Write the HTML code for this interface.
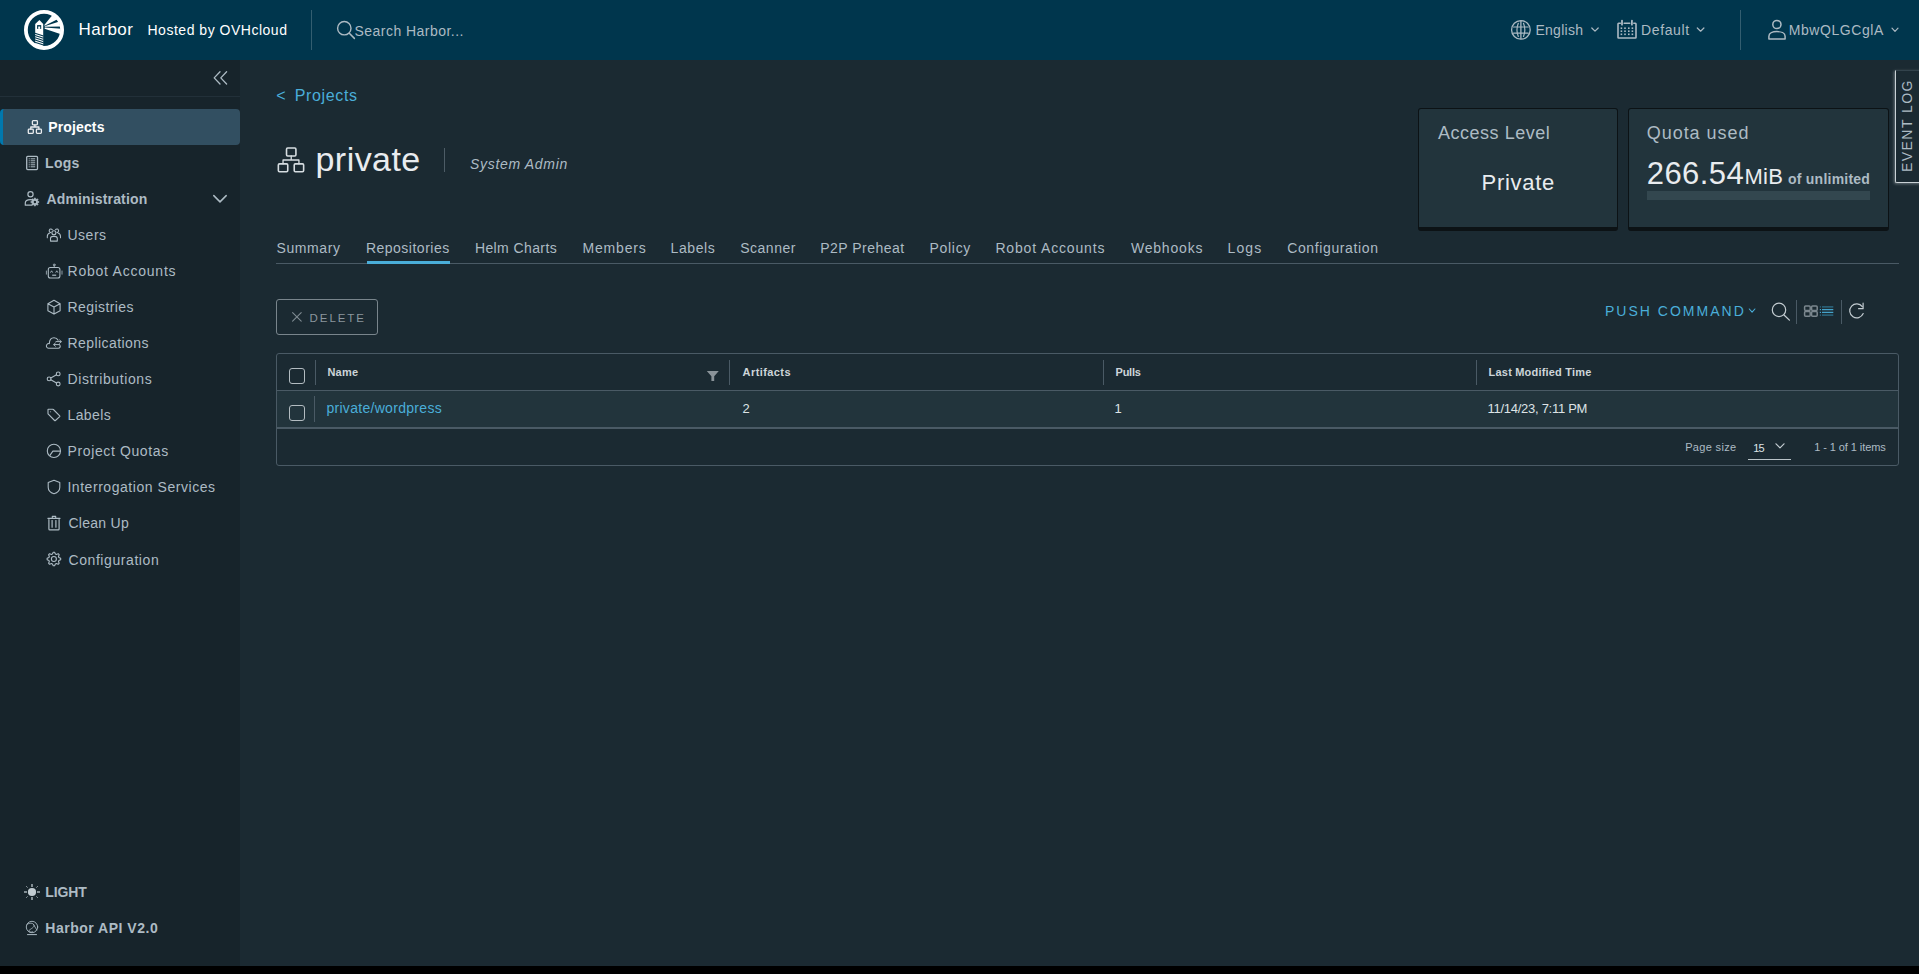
<!DOCTYPE html>
<html><head><meta charset="utf-8"><title>Harbor</title>
<style>
html,body{margin:0;padding:0;}
body{width:1919px;height:974px;position:relative;overflow:hidden;background:#000;font-family:"Liberation Sans",sans-serif;}
.t{position:absolute;white-space:nowrap;font-family:"Liberation Sans",sans-serif;}
.i{position:absolute;overflow:visible;}
.b{position:absolute;box-sizing:border-box;}
</style></head><body>
<div class="b" style="left:0px;top:0px;width:1919px;height:60px;background:#00364d"></div>
<div class="b" style="left:0px;top:60px;width:240px;height:906px;background:#17242b"></div>
<div class="b" style="left:240px;top:60px;width:1679px;height:906px;background:#1b2a32"></div>
<div class="b" style="left:0px;top:96px;width:240px;height:1px;background:#223039"></div>
<div class="b" style="left:0px;top:109px;width:240px;height:36px;background:#324f61;border-radius:4px;border-left:3px solid #0078ae"></div>
<div class="b" style="left:311px;top:10px;width:1px;height:40px;background:rgba(255,255,255,0.2)"></div>
<div class="b" style="left:1740px;top:10px;width:1px;height:40px;background:rgba(255,255,255,0.2)"></div>
<div class="b" style="left:444px;top:148px;width:1px;height:24px;background:#4d5c66"></div>
<div class="b" style="left:1418px;top:108px;width:200px;height:123px;background:#22343c;border:1px solid #0c1215;border-bottom-width:4px;border-radius:3px"></div>
<div class="b" style="left:1628px;top:108px;width:261px;height:123px;background:#22343c;border:1px solid #0c1215;border-bottom-width:4px;border-radius:3px"></div>
<div class="b" style="left:1647px;top:191px;width:223px;height:9px;background:#33474f"></div>
<div class="b" style="left:1895px;top:70px;width:30px;height:113px;background:#1b2a32;border-left:1.5px solid #c9d1d5;border-bottom:1.5px solid #c9d1d5;border-top:1px solid #33434c;box-shadow:-1px 1px 3px rgba(190,200,205,0.45);border-radius:0 0 0 2px"></div>
<span class="t" style="left:1900px;top:172px;transform-origin:0 0;transform:rotate(-90deg);font-size:14px;line-height:14px;letter-spacing:1.45px;color:#adbbc4">EVENT LOG</span>
<div class="b" style="left:276px;top:263px;width:1623px;height:1px;background:#4a5a65"></div>
<div class="b" style="left:367px;top:261px;width:83px;height:3px;background:#4aaed9"></div>
<div class="b" style="left:276px;top:299px;width:102px;height:36px;border:1px solid #79858c;border-radius:3px"></div>
<div class="b" style="left:1796px;top:300px;width:1px;height:24px;background:#4a5a65"></div>
<div class="b" style="left:1841px;top:300px;width:1px;height:24px;background:#4a5a65"></div>
<div class="b" style="left:276px;top:353px;width:1623px;height:113px;border:1px solid #4a5a65;border-radius:3px"></div>
<div class="b" style="left:277px;top:391px;width:1621px;height:36px;background:#22343c"></div>
<div class="b" style="left:277px;top:390px;width:1621px;height:1px;background:#4a5a65"></div>
<div class="b" style="left:277px;top:427px;width:1621px;height:2px;background:#4a5a65"></div>
<div class="b" style="left:315px;top:360px;width:1px;height:25px;background:#4a5a65"></div>
<div class="b" style="left:729px;top:360px;width:1px;height:25px;background:#4a5a65"></div>
<div class="b" style="left:1103px;top:360px;width:1px;height:25px;background:#4a5a65"></div>
<div class="b" style="left:1476px;top:360px;width:1px;height:25px;background:#4a5a65"></div>
<div class="b" style="left:314px;top:396px;width:1px;height:26px;background:#4a5a65"></div>
<div class="b" style="left:289px;top:368px;width:16px;height:16px;border:1.5px solid #b3bcc1;border-radius:3px"></div>
<div class="b" style="left:289px;top:405px;width:16px;height:16px;border:1.5px solid #b3bcc1;border-radius:3px"></div>
<div class="b" style="left:1748px;top:459px;width:43px;height:1px;background:#b9c3c8"></div>
<div class="b" style="left:0px;top:966px;width:1919px;height:8px;background:#000"></div>
<svg class="i" style="left:0;top:0;width:1919px;height:974px" viewBox="0 0 1919 974"><defs><clipPath id="lc"><circle cx="44" cy="29.9" r="16.7"/></clipPath></defs>
<circle cx="44" cy="29.9" r="18.1" fill="none" stroke="#fff" stroke-width="3.8"/>
<g clip-path="url(#lc)" fill="#fff">
<polygon points="35.2,24.1 39.4,20.1 43.2,24.1 43.2,48 35.2,48"/>
<polygon points="44.3,24.9 53.5,13.8 60,18 44.6,25.8"/>
<polygon points="44.6,26.25 61,20.9 62,26.4 44.8,26.85"/>
<polygon points="44.8,27.5 62,28.75 62,34.7 44.6,28.8"/>
</g>
<rect x="37.1" y="25.1" width="4.1" height="3.8" fill="#00364d"/>
<rect x="38.2" y="26.5" width="2" height="2.4" fill="#fff"/>
<g clip-path="url(#lc)" stroke="#00364d" stroke-width="1.05">
<line x1="35" y1="33.2" x2="43.4" y2="36.1"/><line x1="35" y1="35.45" x2="43.4" y2="38.35"/>
<line x1="35" y1="37.7" x2="43.4" y2="40.6"/><line x1="35" y1="39.95" x2="43.4" y2="42.85"/>
<line x1="35" y1="42.2" x2="43.4" y2="45.1"/>
</g><circle cx="344.3" cy="28.2" r="6.7" fill="none" stroke="#acbac3" stroke-width="1.4" stroke-linecap="round" stroke-linejoin="round"/><line x1="349.3" y1="33.3" x2="354.4" y2="38.4" fill="none" stroke="#acbac3" stroke-width="1.5" stroke-linecap="round" stroke-linejoin="round"/><circle cx="1520.9" cy="29.9" r="9.3" fill="none" stroke="#acbac3" stroke-width="1.3" stroke-linecap="round" stroke-linejoin="round"/><line x1="1520.9" y1="21.3" x2="1520.9" y2="38.5" fill="none" stroke="#acbac3" stroke-width="1.3" stroke-linecap="round" stroke-linejoin="round"/><line x1="1513.5" y1="27" x2="1528.3" y2="27" fill="none" stroke="#acbac3" stroke-width="1.2" stroke-linecap="round" stroke-linejoin="round"/><line x1="1513.5" y1="33.2" x2="1528.3" y2="33.2" fill="none" stroke="#acbac3" stroke-width="1.2" stroke-linecap="round" stroke-linejoin="round"/><path d="M1518.3,23.3 Q1515.6,29.9 1518.3,36.5 M1523.5,23.3 Q1526.2,29.9 1523.5,36.5" fill="none" stroke="#acbac3" stroke-width="1.2" stroke-linecap="round" stroke-linejoin="round"/><polyline points="1591.8,28 1595,31.2 1598.2,28" fill="none" stroke="#acbac3" stroke-width="1.2" stroke-linecap="round" stroke-linejoin="round"/><path d="M1620.3,23.3 L1618.6,23.3 Q1618,23.3 1618,24 L1618,37.4 Q1618,38 1618.6,38 L1635.4,38 Q1636,38 1636,37.4 L1636,24 Q1636,23.3 1635.4,23.3 L1633.8,23.3" fill="none" stroke="#acbac3" stroke-width="1.6" stroke-linecap="round" stroke-linejoin="round"/><line x1="1624.2" y1="23.3" x2="1629.7" y2="23.3" fill="none" stroke="#acbac3" stroke-width="1.6" stroke-linecap="round" stroke-linejoin="round"/><line x1="1622" y1="20.6" x2="1622" y2="24.7" fill="none" stroke="#acbac3" stroke-width="1.8" stroke-linecap="round" stroke-linejoin="round"/><line x1="1631.9" y1="20.6" x2="1631.9" y2="24.7" fill="none" stroke="#acbac3" stroke-width="1.8" stroke-linecap="round" stroke-linejoin="round"/><rect x="1620.6000000000001" y="27.4" width="1.6" height="1.6" fill="#acbac3"/><rect x="1624.2" y="27.4" width="1.6" height="1.6" fill="#acbac3"/><rect x="1628.0" y="27.4" width="1.6" height="1.6" fill="#acbac3"/><rect x="1631.6000000000001" y="27.4" width="1.6" height="1.6" fill="#acbac3"/><rect x="1620.6000000000001" y="30.4" width="1.6" height="1.6" fill="#acbac3"/><rect x="1624.2" y="30.4" width="1.6" height="1.6" fill="#acbac3"/><rect x="1628.0" y="30.4" width="1.6" height="1.6" fill="#acbac3"/><rect x="1631.6000000000001" y="30.4" width="1.6" height="1.6" fill="#acbac3"/><rect x="1620.6000000000001" y="33.5" width="1.6" height="1.6" fill="#acbac3"/><rect x="1624.2" y="33.5" width="1.6" height="1.6" fill="#acbac3"/><rect x="1628.0" y="33.5" width="1.6" height="1.6" fill="#acbac3"/><rect x="1631.6000000000001" y="33.5" width="1.6" height="1.6" fill="#acbac3"/><polyline points="1697.3,28 1700.6,31.2 1703.9,28" fill="none" stroke="#acbac3" stroke-width="1.2" stroke-linecap="round" stroke-linejoin="round"/><circle cx="1776.9" cy="24.5" r="4.1" fill="none" stroke="#acbac3" stroke-width="1.5" stroke-linecap="round" stroke-linejoin="round"/><path d="M1768.9,39 L1768.9,36.3 C1768.9,33.2 1772.8,31.6 1776.9,31.6 C1781,31.6 1785.1,33.2 1785.1,36.3 L1785.1,39 Z" fill="none" stroke="#acbac3" stroke-width="1.5" stroke-linecap="round" stroke-linejoin="round"/><polyline points="1892,28.2 1895,31.3 1898,28.2" fill="none" stroke="#acbac3" stroke-width="1.2" stroke-linecap="round" stroke-linejoin="round"/><polyline points="220,71.8 214.2,77.9 220,84" fill="none" stroke="#adbbc4" stroke-width="1.3" stroke-linecap="round" stroke-linejoin="round"/><polyline points="226.6,71.8 220.8,77.9 226.6,84" fill="none" stroke="#adbbc4" stroke-width="1.3" stroke-linecap="round" stroke-linejoin="round"/><g transform="translate(27.6,120) scale(1.0)"><rect x="4.8" y="0.7" width="5" height="4.2" rx="0.8" fill="none" stroke="#e9ecef" stroke-width="1.3" stroke-linecap="round" stroke-linejoin="round"/><rect x="0.7" y="9.2" width="5" height="4.2" rx="0.8" fill="none" stroke="#e9ecef" stroke-width="1.3" stroke-linecap="round" stroke-linejoin="round"/><rect x="8.8" y="9.2" width="5" height="4.2" rx="0.8" fill="none" stroke="#e9ecef" stroke-width="1.3" stroke-linecap="round" stroke-linejoin="round"/><path d="M7.3,4.9 V7 M3.2,9.2 V7 H11.3 V9.2" fill="none" stroke="#e9ecef" stroke-width="1.3" stroke-linecap="round" stroke-linejoin="round"/></g><rect x="26.7" y="156.3" width="10.8" height="13.3" rx="1" fill="none" stroke="#adbbc4" stroke-width="1.3" stroke-linecap="round" stroke-linejoin="round"/><line x1="30.6" y1="158.8" x2="35.2" y2="158.8" stroke="#adbbc4" stroke-width="1"/><rect x="28.7" y="158.3" width="1" height="1" fill="#adbbc4"/><line x1="30.6" y1="160.8" x2="35.2" y2="160.8" stroke="#adbbc4" stroke-width="1"/><rect x="28.7" y="160.3" width="1" height="1" fill="#adbbc4"/><line x1="30.6" y1="162.8" x2="35.2" y2="162.8" stroke="#adbbc4" stroke-width="1"/><rect x="28.7" y="162.3" width="1" height="1" fill="#adbbc4"/><line x1="30.6" y1="164.8" x2="35.2" y2="164.8" stroke="#adbbc4" stroke-width="1"/><rect x="28.7" y="164.3" width="1" height="1" fill="#adbbc4"/><line x1="30.6" y1="166.8" x2="35.2" y2="166.8" stroke="#adbbc4" stroke-width="1"/><rect x="28.7" y="166.3" width="1" height="1" fill="#adbbc4"/><circle cx="30.5" cy="194.3" r="2.6" fill="none" stroke="#adbbc4" stroke-width="1.2" stroke-linecap="round" stroke-linejoin="round"/><path d="M31.5,205.2 H25.3 V203 C25.3,200.8 27.8,199.6 30.5,199.6 C31.2,199.6 31.8,199.7 32.4,199.8" fill="none" stroke="#adbbc4" stroke-width="1.2" stroke-linecap="round" stroke-linejoin="round"/><polygon points="34.50,197.92 35.30,197.92 35.77,199.13 36.31,199.35 37.50,198.83 38.07,199.40 37.55,200.59 37.77,201.13 38.98,201.60 38.98,202.40 37.77,202.87 37.55,203.41 38.07,204.60 37.50,205.17 36.31,204.65 35.77,204.87 35.30,206.08 34.50,206.08 34.03,204.87 33.49,204.65 32.30,205.17 31.73,204.60 32.25,203.41 32.03,202.87 30.82,202.40 30.82,201.60 32.03,201.13 32.25,200.59 31.73,199.40 32.30,198.83 33.49,199.35 34.03,199.13" fill="#adbbc4" stroke="#adbbc4" stroke-width="0.6" stroke-linejoin="round"/><circle cx="34.9" cy="202" r="1.2" fill="#17242b"/><polyline points="213.8,195.6 220,201.9 226.2,195.6" fill="none" stroke="#adbbc4" stroke-width="1.5" stroke-linecap="round" stroke-linejoin="round"/><circle cx="53.9" cy="232.7" r="2.0" fill="none" stroke="#adbbc4" stroke-width="1.1" stroke-linecap="round" stroke-linejoin="round"/><path d="M50.5,241.1 V238.3 C50.5,236.9 51.9,236.4 53.9,236.4 C55.9,236.4 57.3,236.9 57.3,238.3 V241.1 Z" fill="none" stroke="#adbbc4" stroke-width="1.1" stroke-linecap="round" stroke-linejoin="round"/><path d="M52.3,229.8 C51.9,229.2 51.2,229 50.5,229.1 C49.5,229.3 49,230.3 49.3,231.3 C49.5,231.9 50.1,232.3 50.8,232.4 M49.8,232.9 C48.3,233.4 47.3,234.7 47.3,236.4 V237.8" fill="none" stroke="#adbbc4" stroke-width="1.05" stroke-linecap="round" stroke-linejoin="round"/><path d="M55.5,229.8 C55.9,229.2 56.6,229 57.3,229.1 C58.3,229.3 58.8,230.3 58.5,231.3 C58.3,231.9 57.7,232.3 57,232.4 M58,232.9 C59.5,233.4 60.5,234.7 60.5,236.4 V237.8" fill="none" stroke="#adbbc4" stroke-width="1.05" stroke-linecap="round" stroke-linejoin="round"/><rect x="48.3" y="267.5" width="11.6" height="10.5" rx="2" fill="none" stroke="#adbbc4" stroke-width="1.1" stroke-linecap="round" stroke-linejoin="round"/><circle cx="54.2" cy="264.9" r="0.9" fill="none" stroke="#adbbc4" stroke-width="0.85" stroke-linecap="round" stroke-linejoin="round"/><line x1="54.2" y1="265.8" x2="54.2" y2="267.5" fill="none" stroke="#adbbc4" stroke-width="0.85" stroke-linecap="round" stroke-linejoin="round"/><path d="M50.7,272.3 L51.6,270.8 L52.5,272.3 M55.9,272.3 L56.8,270.8 L57.7,272.3" fill="none" stroke="#adbbc4" stroke-width="0.9" stroke-linecap="round" stroke-linejoin="round"/><rect x="52.2" y="274.6" width="4" height="1.2" fill="#adbbc4"/><line x1="46.4" y1="271" x2="46.4" y2="274.2" fill="none" stroke="#adbbc4" stroke-width="0.8" stroke-linecap="round" stroke-linejoin="round"/><line x1="62" y1="271" x2="62" y2="274.2" fill="none" stroke="#adbbc4" stroke-width="0.8" stroke-linecap="round" stroke-linejoin="round"/><path d="M54,300.3 L60.1,303.7 V310.8 L54,314.1 L47.9,310.8 V303.7 Z M47.9,303.7 L54,307 L60.1,303.7 M54,307 V314.1" fill="none" stroke="#adbbc4" stroke-width="1.1" stroke-linecap="round" stroke-linejoin="round"/><path d="M59.8,345 C60.8,346.5 60,348.2 58.2,348.2 H48.6 C46.5,348.2 45.8,346 46.9,344.5 C47.5,343.7 48.5,343.5 49.3,343.6 C49.5,340 51.5,337.8 54,337.8 C56,337.8 57.4,338.8 58.1,340.2" fill="none" stroke="#adbbc4" stroke-width="1.1" stroke-linecap="round" stroke-linejoin="round"/><path d="M56,341.6 H61.2 M59.6,340 L61.3,341.6 L59.6,343.2" fill="none" stroke="#adbbc4" stroke-width="1" stroke-linecap="round" stroke-linejoin="round"/><path d="M59.5,344.6 H53.8 M55.4,343 L53.7,344.6 L55.4,346.2" fill="none" stroke="#adbbc4" stroke-width="1" stroke-linecap="round" stroke-linejoin="round"/><circle cx="49.1" cy="378.9" r="1.9" fill="none" stroke="#adbbc4" stroke-width="1.1" stroke-linecap="round" stroke-linejoin="round"/><circle cx="58.2" cy="373.9" r="1.9" fill="none" stroke="#adbbc4" stroke-width="1.1" stroke-linecap="round" stroke-linejoin="round"/><circle cx="58.2" cy="384" r="1.9" fill="none" stroke="#adbbc4" stroke-width="1.1" stroke-linecap="round" stroke-linejoin="round"/><line x1="50.8" y1="378" x2="56.5" y2="374.8" fill="none" stroke="#adbbc4" stroke-width="1.1" stroke-linecap="round" stroke-linejoin="round"/><line x1="50.8" y1="379.8" x2="56.5" y2="383.1" fill="none" stroke="#adbbc4" stroke-width="1.1" stroke-linecap="round" stroke-linejoin="round"/><path d="M48.4,409.2 H52.6 Q53.1,409.2 53.4,409.5 L59.7,415.8 Q60.1,416.2 59.7,416.6 L55.4,420.5 Q55,420.9 54.6,420.5 L48.3,414.2 Q48,413.9 48,413.4 V409.6 Q48,409.2 48.4,409.2 Z" fill="none" stroke="#adbbc4" stroke-width="1.1" stroke-linecap="round" stroke-linejoin="round"/><circle cx="50.6" cy="411.8" r="0.55" fill="#adbbc4"/><circle cx="53.9" cy="450.9" r="6.6" fill="none" stroke="#adbbc4" stroke-width="1.1" stroke-linecap="round" stroke-linejoin="round"/><path d="M49.9,455.4 L52.9,451.1 H60.5" fill="none" stroke="#adbbc4" stroke-width="1.1" stroke-linecap="round" stroke-linejoin="round"/><path d="M54,480.3 L59.8,482.6 V487.2 C59.8,490.6 57.2,492.7 54,493.8 C50.8,492.7 48.2,490.6 48.2,487.2 V482.6 Z" fill="none" stroke="#adbbc4" stroke-width="1.1" stroke-linecap="round" stroke-linejoin="round"/><line x1="47.9" y1="518.3" x2="60" y2="518.3" fill="none" stroke="#adbbc4" stroke-width="1.2" stroke-linecap="round" stroke-linejoin="round"/><path d="M52.3,518 V516.4 H55.7 V518" fill="none" stroke="#adbbc4" stroke-width="1.1" stroke-linecap="round" stroke-linejoin="round"/><path d="M48.9,519.5 V528.9 Q48.9,529.8 49.8,529.8 H58.2 Q59.1,529.8 59.1,528.9 V519.5" fill="none" stroke="#adbbc4" stroke-width="1.2" stroke-linecap="round" stroke-linejoin="round"/><line x1="52.1" y1="520.6" x2="52.1" y2="527.2" fill="none" stroke="#adbbc4" stroke-width="1.2" stroke-linecap="round" stroke-linejoin="round"/><line x1="55.9" y1="520.6" x2="55.9" y2="527.2" fill="none" stroke="#adbbc4" stroke-width="1.2" stroke-linecap="round" stroke-linejoin="round"/><polygon points="53.23,552.23 54.57,552.23 55.41,554.02 56.35,554.41 58.21,553.74 59.16,554.69 58.49,556.55 58.88,557.49 60.67,558.33 60.67,559.67 58.88,560.51 58.49,561.45 59.16,563.31 58.21,564.26 56.35,563.59 55.41,563.98 54.57,565.77 53.23,565.77 52.39,563.98 51.45,563.59 49.59,564.26 48.64,563.31 49.31,561.45 48.92,560.51 47.13,559.67 47.13,558.33 48.92,557.49 49.31,556.55 48.64,554.69 49.59,553.74 51.45,554.41 52.39,554.02" fill="none" stroke="#adbbc4" stroke-width="1.1" stroke-linecap="round" stroke-linejoin="round"/><circle cx="53.9" cy="559" r="2.5" fill="none" stroke="#adbbc4" stroke-width="1.1" stroke-linecap="round" stroke-linejoin="round"/><circle cx="32" cy="892" r="4.1" fill="#c2ccd2"/><path d="M32,884 V887 M32,897 V900 M24,892 H27 M37,892 H40" stroke="#a5b0b6" stroke-width="1.5"/><path d="M26.2,886.2 L27.6,887.6 M36.4,896.4 L37.8,897.8 M26.2,897.8 L27.6,896.4 M36.4,887.6 L37.8,886.2" stroke="#a5b0b6" stroke-width="0.9"/><circle cx="32" cy="927" r="5.7" fill="none" stroke="#adbbc4" stroke-width="0.9" stroke-linecap="round" stroke-linejoin="round"/><path d="M27,924.5 C29.5,922.5 33,922.8 34,925 C35,927 31,928.5 29,930.5 C28,931.5 30,932.8 32.5,931.8 M33.5,924.5 L36.8,930" fill="none" stroke="#adbbc4" stroke-width="0.8" stroke-linecap="round" stroke-linejoin="round"/><line x1="27.5" y1="934.6" x2="36.5" y2="934.6" fill="none" stroke="#adbbc4" stroke-width="1" stroke-linecap="round" stroke-linejoin="round"/><g transform="translate(277.5,147.2) scale(1.88)"><rect x="4.8" y="0.45" width="5" height="4.2" rx="0.6" fill="none" stroke="#d6dde1" stroke-width="0.85" stroke-linecap="round" stroke-linejoin="round"/><rect x="0.45" y="8.85" width="5" height="4.2" rx="0.6" fill="none" stroke="#d6dde1" stroke-width="0.85" stroke-linecap="round" stroke-linejoin="round"/><rect x="8.9" y="8.85" width="5" height="4.2" rx="0.6" fill="none" stroke="#d6dde1" stroke-width="0.85" stroke-linecap="round" stroke-linejoin="round"/><path d="M7.3,4.65 V6.8 M2.95,8.85 V6.8 H11.4 V8.85" fill="none" stroke="#d6dde1" stroke-width="0.7" stroke-linecap="round" stroke-linejoin="round"/></g><path d="M292.6,312.6 L301.2,321.2 M301.2,312.6 L292.6,321.2" fill="none" stroke="#7f8b92" stroke-width="1.1" stroke-linecap="round" stroke-linejoin="round"/><polyline points="1749.3,309 1752.1,312.2 1754.9,309" fill="none" stroke="#4aaed9" stroke-width="1.1" stroke-linecap="round" stroke-linejoin="round"/><circle cx="1779" cy="309.9" r="6.7" fill="none" stroke="#c3ccd1" stroke-width="1.2" stroke-linecap="round" stroke-linejoin="round"/><line x1="1784" y1="315" x2="1789.4" y2="320.1" fill="none" stroke="#c3ccd1" stroke-width="1.3" stroke-linecap="round" stroke-linejoin="round"/><rect x="1804.6" y="305.9" width="5.6" height="4.6" rx="1" fill="none" stroke="#7b878e" stroke-width="1.5"/><rect x="1811.6" y="305.9" width="5.6" height="4.6" rx="1" fill="none" stroke="#7b878e" stroke-width="1.5"/><rect x="1804.6" y="311.6" width="5.6" height="4.6" rx="1" fill="none" stroke="#7b878e" stroke-width="1.5"/><rect x="1811.6" y="311.6" width="5.6" height="4.6" rx="1" fill="none" stroke="#7b878e" stroke-width="1.5"/><line x1="1822" y1="306.9" x2="1833.3" y2="306.9" stroke="#2f6f8a" stroke-width="1.3"/><rect x="1819.8" y="306.29999999999995" width="1.2" height="1.2" fill="#2f6f8a"/><line x1="1822" y1="309.6" x2="1833.3" y2="309.6" stroke="#44a2ca" stroke-width="1.3"/><rect x="1819.8" y="309.0" width="1.2" height="1.2" fill="#44a2ca"/><line x1="1822" y1="312.4" x2="1833.3" y2="312.4" stroke="#44a2ca" stroke-width="1.3"/><rect x="1819.8" y="311.79999999999995" width="1.2" height="1.2" fill="#44a2ca"/><line x1="1822" y1="315.1" x2="1833.3" y2="315.1" stroke="#2f6f8a" stroke-width="1.3"/><rect x="1819.8" y="314.5" width="1.2" height="1.2" fill="#2f6f8a"/><path d="M1863.2,313.6 A7,7 0 1 1 1862.3,306.6" fill="none" stroke="#c3ccd1" stroke-width="1.2" stroke-linecap="round" stroke-linejoin="round"/><path d="M1863.1,303.2 V308.7 H1858.6" fill="none" stroke="#c3ccd1" stroke-width="1.2" stroke-linecap="round" stroke-linejoin="round"/><path d="M706.8,371 H718.8 L714.2,376.3 V381 H711.4 V376.3 Z" fill="#8a9399"/><polyline points="1776,443.8 1780,447.9 1784,443.8" fill="none" stroke="#c3ccd1" stroke-width="1.2" stroke-linecap="round" stroke-linejoin="round"/></svg>
<span class="t" style="left:78.60px;top:21.00px;font-size:17px;line-height:17px;color:#ffffff;letter-spacing:0.48px;">Harbor</span><span class="t" style="left:147.50px;top:23.40px;font-size:14px;line-height:14px;color:#ffffff;letter-spacing:0.512px;">Hosted by OVHcloud</span><span class="t" style="left:354.50px;top:24.00px;font-size:14px;line-height:14px;color:#acbac3;letter-spacing:0.467px;">Search Harbor...</span><span class="t" style="left:1535.50px;top:23.00px;font-size:14px;line-height:14px;color:#acbac3;letter-spacing:0.25px;">English</span><span class="t" style="left:1641.00px;top:23.00px;font-size:14px;line-height:14px;color:#acbac3;letter-spacing:0.617px;">Default</span><span class="t" style="left:1788.70px;top:23.00px;font-size:14px;line-height:14px;color:#acbac3;letter-spacing:0.567px;">MbwQLGCglA</span><span class="t" style="left:48.30px;top:120.40px;font-size:14px;line-height:14px;color:#ffffff;letter-spacing:0.129px;font-weight:700;">Projects</span><span class="t" style="left:45.10px;top:156.20px;font-size:14px;line-height:14px;color:#adbbc4;letter-spacing:0.233px;font-weight:700;">Logs</span><span class="t" style="left:46.50px;top:192.00px;font-size:14px;line-height:14px;color:#adbbc4;letter-spacing:0.146px;font-weight:700;">Administration</span><span class="t" style="left:67.50px;top:228.10px;font-size:14px;line-height:14px;color:#adbbc4;letter-spacing:0.5px;">Users</span><span class="t" style="left:67.50px;top:263.60px;font-size:14px;line-height:14px;color:#adbbc4;letter-spacing:0.769px;">Robot Accounts</span><span class="t" style="left:67.50px;top:299.60px;font-size:14px;line-height:14px;color:#adbbc4;letter-spacing:0.422px;">Registries</span><span class="t" style="left:67.50px;top:335.60px;font-size:14px;line-height:14px;color:#adbbc4;letter-spacing:0.436px;">Replications</span><span class="t" style="left:67.50px;top:371.70px;font-size:14px;line-height:14px;color:#adbbc4;letter-spacing:0.6px;">Distributions</span><span class="t" style="left:67.50px;top:407.90px;font-size:14px;line-height:14px;color:#adbbc4;letter-spacing:0.4px;">Labels</span><span class="t" style="left:67.50px;top:444.00px;font-size:14px;line-height:14px;color:#adbbc4;letter-spacing:0.623px;">Project Quotas</span><span class="t" style="left:67.40px;top:480.20px;font-size:14px;line-height:14px;color:#adbbc4;letter-spacing:0.548px;">Interrogation Services</span><span class="t" style="left:68.50px;top:516.40px;font-size:14px;line-height:14px;color:#adbbc4;letter-spacing:0.257px;">Clean Up</span><span class="t" style="left:68.50px;top:552.50px;font-size:14px;line-height:14px;color:#adbbc4;letter-spacing:0.575px;">Configuration</span><span class="t" style="left:45.30px;top:885.20px;font-size:14px;line-height:14px;color:#adbbc4;letter-spacing:-0.1px;font-weight:700;">LIGHT</span><span class="t" style="left:45.30px;top:921.20px;font-size:14px;line-height:14px;color:#adbbc4;letter-spacing:0.507px;font-weight:700;">Harbor API V2.0</span><span class="t" style="left:276.30px;top:87.80px;font-size:16px;line-height:16px;color:#4aaed9;letter-spacing:0px;">&lt;</span><span class="t" style="left:294.70px;top:87.80px;font-size:16px;line-height:16px;color:#4aaed9;letter-spacing:0.643px;">Projects</span><span class="t" style="left:315.50px;top:141.80px;font-size:34px;line-height:34px;color:#e9ecef;letter-spacing:0.45px;">private</span><span class="t" style="left:470.00px;top:157.20px;font-size:14px;line-height:14px;color:#adbbc4;letter-spacing:0.682px;font-style:italic;">System Admin</span><span class="t" style="left:1438.00px;top:123.80px;font-size:18px;line-height:18px;color:#adbbc4;letter-spacing:0.518px;">Access Level</span><span class="t" style="left:1481.60px;top:171.80px;font-size:22px;line-height:22px;color:#e9ecef;letter-spacing:0.683px;">Private</span><span class="t" style="left:1646.70px;top:124.00px;font-size:18px;line-height:18px;color:#adbbc4;letter-spacing:0.978px;">Quota used</span><span class="t" style="left:1646.70px;top:158.00px;font-size:31px;line-height:31px;color:#e9ecef;letter-spacing:0.46px;">266.54</span><span class="t" style="left:1744.40px;top:166.00px;font-size:22px;line-height:22px;color:#e9ecef;letter-spacing:0.3px;">MiB</span><span class="t" style="left:1788.00px;top:172.00px;font-size:14px;line-height:14px;color:#adbbc4;letter-spacing:0.236px;font-weight:700;">of unlimited</span><span class="t" style="left:276.50px;top:241.10px;font-size:14px;line-height:14px;color:#adbbc4;letter-spacing:0.583px;">Summary</span><span class="t" style="left:365.90px;top:241.10px;font-size:14px;line-height:14px;color:#adbbc4;letter-spacing:0.5px;">Repositories</span><span class="t" style="left:474.90px;top:241.10px;font-size:14px;line-height:14px;color:#adbbc4;letter-spacing:0.4px;">Helm Charts</span><span class="t" style="left:582.50px;top:241.10px;font-size:14px;line-height:14px;color:#adbbc4;letter-spacing:0.833px;">Members</span><span class="t" style="left:670.50px;top:241.10px;font-size:14px;line-height:14px;color:#adbbc4;letter-spacing:0.6px;">Labels</span><span class="t" style="left:740.30px;top:241.10px;font-size:14px;line-height:14px;color:#adbbc4;letter-spacing:0.483px;">Scanner</span><span class="t" style="left:820.30px;top:241.10px;font-size:14px;line-height:14px;color:#adbbc4;letter-spacing:0.47px;">P2P Preheat</span><span class="t" style="left:929.50px;top:241.10px;font-size:14px;line-height:14px;color:#adbbc4;letter-spacing:0.7px;">Policy</span><span class="t" style="left:995.40px;top:241.10px;font-size:14px;line-height:14px;color:#adbbc4;letter-spacing:0.846px;">Robot Accounts</span><span class="t" style="left:1130.90px;top:241.10px;font-size:14px;line-height:14px;color:#adbbc4;letter-spacing:0.814px;">Webhooks</span><span class="t" style="left:1227.40px;top:241.10px;font-size:14px;line-height:14px;color:#adbbc4;letter-spacing:1.2px;">Logs</span><span class="t" style="left:1287.20px;top:241.10px;font-size:14px;line-height:14px;color:#adbbc4;letter-spacing:0.625px;">Configuration</span><span class="t" style="left:309.60px;top:313.20px;font-size:11.5px;line-height:11.5px;color:#8a969d;letter-spacing:1.93px;">DELETE</span><span class="t" style="left:1605.00px;top:304.00px;font-size:14px;line-height:14px;color:#4aaed9;letter-spacing:2.009px;">PUSH COMMAND</span><span class="t" style="left:327.40px;top:367.40px;font-size:11px;line-height:11px;color:#cdd5d9;letter-spacing:0.233px;font-weight:700;">Name</span><span class="t" style="left:742.60px;top:367.10px;font-size:11px;line-height:11px;color:#cdd5d9;letter-spacing:0.412px;font-weight:700;">Artifacts</span><span class="t" style="left:1115.60px;top:367.10px;font-size:11px;line-height:11px;color:#cdd5d9;letter-spacing:-0.275px;font-weight:700;">Pulls</span><span class="t" style="left:1488.60px;top:367.10px;font-size:11px;line-height:11px;color:#cdd5d9;letter-spacing:0.194px;font-weight:700;">Last Modified Time</span><span class="t" style="left:326.40px;top:401.40px;font-size:14px;line-height:14px;color:#4aaed9;letter-spacing:0.3px;">private/wordpress</span><span class="t" style="left:742.60px;top:402.10px;font-size:13px;line-height:13px;color:#dde3e6;letter-spacing:0px;">2</span><span class="t" style="left:1114.60px;top:402.10px;font-size:13px;line-height:13px;color:#dde3e6;letter-spacing:0px;">1</span><span class="t" style="left:1487.60px;top:401.70px;font-size:13px;line-height:13px;color:#dde3e6;letter-spacing:-0.281px;">11/14/23, 7:11 PM</span><span class="t" style="left:1685.20px;top:442.10px;font-size:11px;line-height:11px;color:#adbbc4;letter-spacing:0.338px;">Page size</span><span class="t" style="left:1753.30px;top:442.80px;font-size:11px;line-height:11px;color:#dde3e6;letter-spacing:-0.8px;">15</span><span class="t" style="left:1814.30px;top:442.10px;font-size:11px;line-height:11px;color:#adbbc4;letter-spacing:-0.087px;">1 - 1 of 1 items</span>
</body></html>
